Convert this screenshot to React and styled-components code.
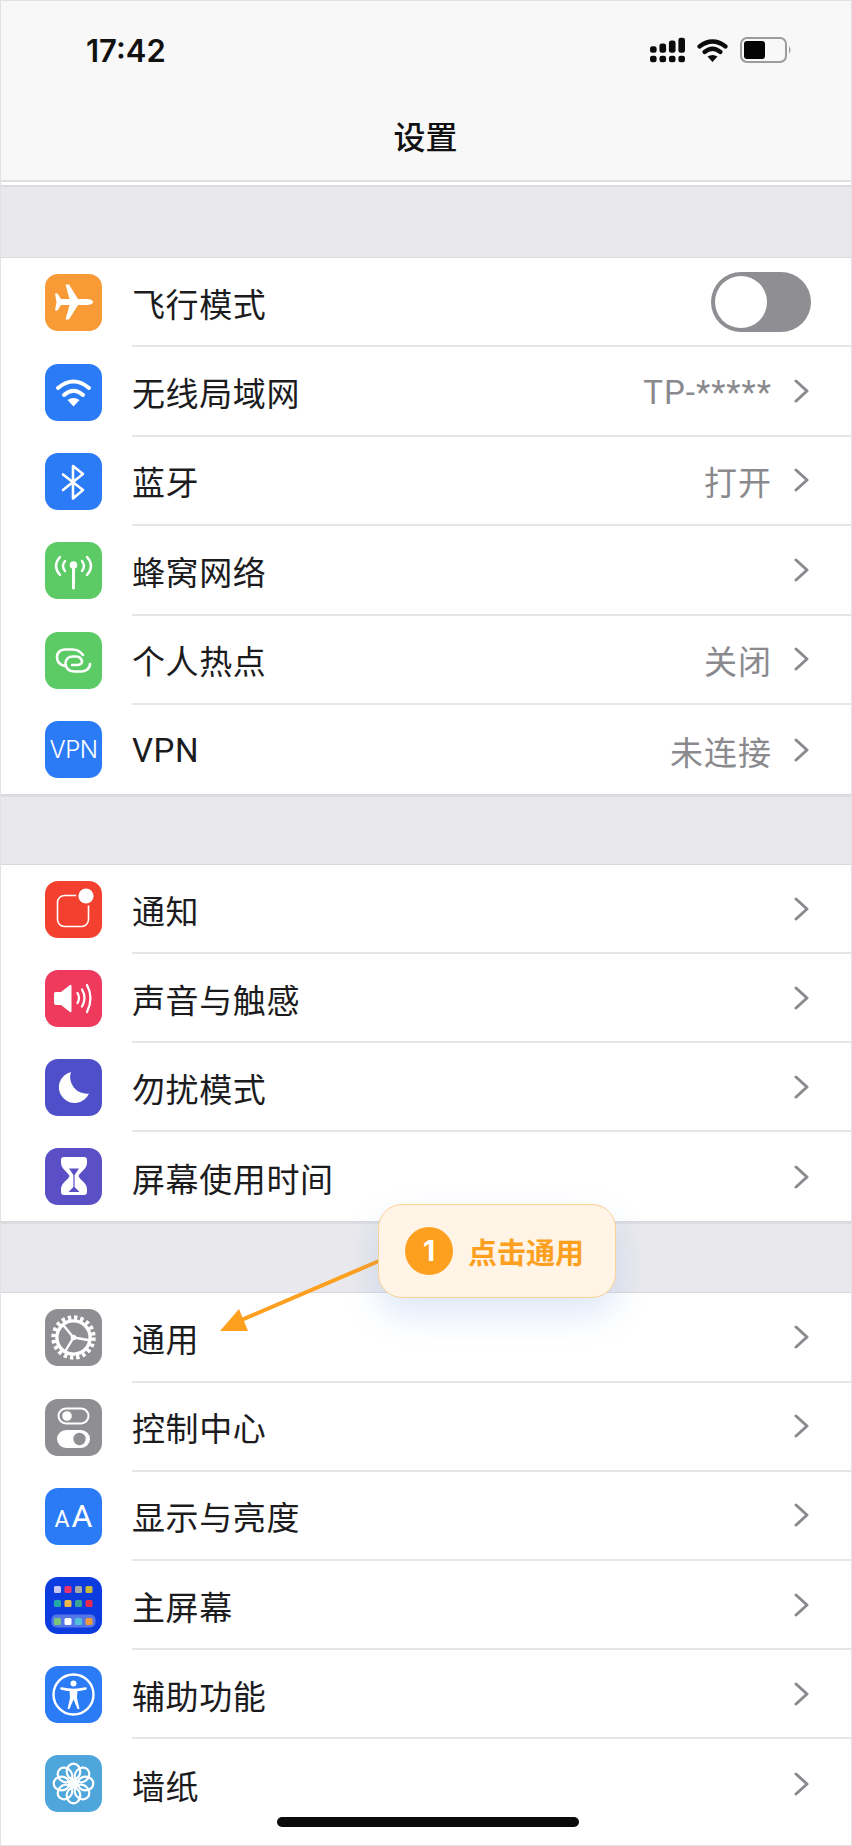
import React from 'react';
import styled, { createGlobalStyle } from 'styled-components';

const GlobalStyle = createGlobalStyle`
  html, body {
    margin: 0;
    padding: 0;
    background: #fff;
  }
  body {
    font-family: Inter, "Noto Sans CJK SC", sans-serif;
    color: #1a1a1a;
  }
`;

const Phone = styled.div`
  position: relative;
  box-sizing: border-box;
  width: 852px;
  height: 1846px;
  overflow: hidden;
  background: #fff;
  border: 1px solid #e2e2e4;
`;

const Header = styled.header`
  box-sizing: border-box;
  height: 181px;
  padding: 33px 59px 0 85px;
  background: #f8f8f8;
  border-bottom: 2px solid #dfdfe1;
  margin-bottom: 3px;
`;

const StatusBar = styled.div`
  display: flex;
  align-items: center;
  justify-content: space-between;
  height: 32px;
`;

const Clock = styled.span`
  font-size: 31px;
  font-weight: 600;
  color: #111;
`;

const StatusIcons = styled.div`
  display: flex;
  align-items: center;
  gap: 12px;
`;

const Title = styled.h1`
  margin: 49px 0 0 -27px;
  text-align: center;
  font-size: 32px;
  line-height: 46px;
  font-weight: 500;
  color: #111;
`;

const Gap = styled.div`
  height: ${(props) => props.$height}px;
  background: #e9e9ed;
  border-top: 2px solid #dcdce0;
  box-sizing: border-box;
`;

const Section = styled.section`
  background: #fff;
  border-top: 1px solid #d9d9dd;
  border-bottom: ${(props) => (props.$open ? 'none' : '1px solid #d9d9dd')};
`;

const Row = styled.div`
  display: flex;
  align-items: center;
  height: ${(props) => props.$height}px;
  padding-left: 44px;
`;

const IconBox = styled.div`
  flex: none;
  width: 57px;
  height: 57px;
  border-radius: 13px;
  background: ${(props) => props.$bg};
  overflow: hidden;
  display: flex;
  align-items: center;
  justify-content: center;
  color: #fff;

  svg {
    display: block;
  }
`;

const RowBody = styled.div`
  flex: 1;
  align-self: stretch;
  display: flex;
  align-items: center;
  margin-left: 30px;
  padding-right: 41px;
  border-bottom: ${(props) => (props.$last ? 'none' : '2px solid #e6e6e8')};
`;

const Label = styled.span`
  flex: 1;
  padding-top: 2px;
  font-family: Roboto, "Noto Sans CJK SC", sans-serif;
  font-size: 33px;
  letter-spacing: 0.6px;
  color: #1c1c1e;
`;

const Value = styled.span`
  padding-top: 2px;
  font-family: Roboto, "Noto Sans CJK SC", sans-serif;
  font-size: 33px;
  color: #8a8a8e;
  margin-right: 21px;
  letter-spacing: 1px;
`;

const Toggle = styled.div`
  box-sizing: border-box;
  width: 100px;
  height: 60px;
  margin-right: -1px;
  padding: 4px;
  border-radius: 30px;
  background: #8e8e93;
`;

const Knob = styled.div`
  width: 52px;
  height: 52px;
  border-radius: 50%;
  background: #fff;
`;

const VpnMark = styled.span`
  font-size: 24px;
  font-weight: 300;
  line-height: 1;
  letter-spacing: -0.5px;
`;

const AaMark = styled.span`
  display: flex;
  align-items: baseline;
  gap: 2px;
  font-family: Roboto, sans-serif;
  line-height: 1;
`;

const AaLetter = styled.span`
  font-size: ${(props) => props.$size}px;
`;

const Callout = styled.div`
  position: absolute;
  left: 377px;
  top: 1203px;
  box-sizing: border-box;
  width: 238px;
  height: 94px;
  display: flex;
  align-items: center;
  gap: 15px;
  padding-left: 26px;
  background: #fff4e6;
  border: 1.5px solid #fbd196;
  border-radius: 24px;
  box-shadow: 0 16px 34px rgba(90, 140, 225, 0.2);
`;

const StepBadge = styled.span`
  flex: none;
  width: 48px;
  height: 48px;
  border-radius: 50%;
  background: #fd9f1f;
  color: #fff;
  font-size: 28px;
  font-weight: 700;
  display: flex;
  align-items: center;
  justify-content: center;
`;

const CalloutText = styled.span`
  font-size: 29px;
  font-weight: 700;
  color: #fd9f1f;
`;

const Arrow = styled.svg`
  position: absolute;
  left: 213px;
  top: 1255px;
`;

const HomeBar = styled.div`
  position: absolute;
  left: 276px;
  top: 1816px;
  width: 302px;
  height: 10px;
  border-radius: 5px;
  background: #0b0b0b;
`;

const Glyph = ({ children }) => (
  <svg width="57" height="57" viewBox="0 0 57 57" fill="none">
    {children}
  </svg>
);

const PlaneIcon = () => (
  <Glyph>
    <path
      d="M48 28c0 2-3 3-6 3h-9L24 45.5h-3.5L24.5 31H16l-3.5 5.5H10L11.5 28 10 19.5h2.5L16 25h8.5l-4-14.5H24L33 25h9c3 0 6 1 6 3Z"
      fill="#fff"
    />
  </Glyph>
);

const WifiIcon = () => (
  <Glyph>
    <g stroke="#fff" strokeWidth="4" strokeLinecap="round">
      <path d="M13 24Q28.5 11 44 24" />
      <path d="M19 31Q28.5 22.5 38 31" />
    </g>
    <path d="M22.5 36Q28.5 32 34.5 36L28.5 42.5Z" fill="#fff" />
  </Glyph>
);

const BluetoothIcon = () => (
  <Glyph>
    <path
      d="M18 21.5 38 37 28 45.5V13L38 21 18 37"
      stroke="#fff"
      strokeWidth="2.6"
      strokeLinejoin="round"
      strokeLinecap="round"
    />
  </Glyph>
);

const CellularIcon = () => (
  <Glyph>
    <g stroke="#fff" strokeWidth="2.4" strokeLinecap="round">
      <path d="M28.5 24V46" strokeWidth="3" />
      <path d="M15 15Q7 24 15 33" />
      <path d="M42 15Q50 24 42 33" />
      <path d="M20 19Q16 24 20 29" />
      <path d="M37 19Q41 24 37 29" />
    </g>
    <circle cx="28.5" cy="23" r="3.8" fill="#fff" />
  </Glyph>
);

const HotspotIcon = () => (
  <Glyph>
    <g stroke="#fff" strokeWidth="2.6" strokeLinecap="round">
      <path d="M38 23C35 19 32 17.5 27.5 17.5H19.5C15 17.5 12 21 12 25 12 30 15.5 33 20 34" />
      <path d="M45 32C45 36.5 41 39.5 36 39.5H29C24 39.5 20.5 36 20.5 31.5 20.5 27.5 23.5 24.5 28 24.5H31C35 24.5 37 27.5 37 29.5 37 31.5 35 33 32 33H27" />
    </g>
  </Glyph>
);

const BellIcon = () => (
  <Glyph>
    <rect x="12.5" y="14.5" width="31" height="31" rx="7" stroke="#fff" strokeWidth="1.6" />
    <circle cx="41" cy="15" r="10" fill="#f4402f" />
    <circle cx="41" cy="15" r="7.6" fill="#fff" />
  </Glyph>
);

const SoundIcon = () => (
  <Glyph>
    <path d="M9 23.5q0-1.5 1.5-1.5H16l9-7q1.5-1 1.5 1v25q0 2-1.5 1l-9-7h-5.5Q9 34.5 9 33Z" fill="#fff" />
    <g stroke="#fff" strokeWidth="2.3" strokeLinecap="round">
      <path d="M32.5 23q3 5 0 10" />
      <path d="M37 19.5q5 8.5 0 17" />
      <path d="M42 15q7 13 0 27" />
    </g>
  </Glyph>
);

const MoonIcon = () => (
  <Glyph>
    <path d="M26 13A15.7 15.7 0 1 0 44 34.5 16.5 16.5 0 0 1 26 13Z" fill="#fff" />
  </Glyph>
);

const HourglassIcon = () => (
  <Glyph>
    <path
      d="M19 9H39Q42 9 42 12V15C42 21 35 24 33.5 28 35 32 42 35 42 41V44Q42 47 39 47H19Q16 47 16 44V41C16 35 23 32 24.5 28 23 24 16 21 16 15V12Q16 9 19 9Z"
      fill="#fff"
    />
    <path d="M24 20.5H34L29.6 27V39L34.5 44H23.5L28.4 39V27Z" fill="#5a4fc4" />
  </Glyph>
);

const GearIcon = () => (
  <Glyph>
    <circle cx="28.5" cy="28.5" r="20" stroke="#fff" strokeWidth="4.4" strokeDasharray="3.4 2.88" />
    <circle cx="28.5" cy="28.5" r="16.6" stroke="#fff" strokeWidth="3.4" />
    <g stroke="#fff" strokeWidth="2.4" strokeLinecap="round">
      <path d="M28.5 28.5 19 17" />
      <path d="M28.5 28.5 43 31" />
      <path d="M28.5 28.5 21 41" />
    </g>
    <circle cx="28.5" cy="28.5" r="2.8" fill="#fff" />
  </Glyph>
);

const ControlIcon = () => (
  <Glyph>
    <rect x="13.5" y="9.5" width="30" height="15" rx="7.5" stroke="#fff" strokeWidth="2" />
    <circle cx="22" cy="17" r="4.8" fill="#fff" />
    <rect x="12" y="31" width="33" height="18" rx="9" fill="#fff" />
    <circle cx="34.5" cy="40" r="6.2" fill="#8e8e93" />
  </Glyph>
);

const homeApps = [
  [9, 9, '#c9c6f5'], [19.5, 9, '#e8336f'], [30, 9, '#a7a7a7'], [40.5, 9, '#c9b63f'],
  [9, 23, '#25a8a8'], [19.5, 23, '#eeb84a'], [30, 23, '#3aa596'], [40.5, 23, '#ea2a4e'],
  [9, 41, '#7cc47c'], [19.5, 41, '#ffffff'], [30, 41, '#4fc0d8'], [40.5, 41, '#f09a40'],
];

const HomeScreenIcon = () => (
  <Glyph>
    <rect x="6.5" y="37.5" width="44" height="13" rx="5" fill="#fff" opacity="0.3" />
    {homeApps.map(([x, y, color]) => (
      <rect key={`${x}-${y}`} x={x} y={y} width="7" height="7" rx="1.5" fill={color} />
    ))}
  </Glyph>
);

const AccessIcon = () => (
  <Glyph>
    <circle cx="28.5" cy="28.5" r="20" stroke="#fff" strokeWidth="2.4" />
    <circle cx="28.5" cy="17.5" r="3" fill="#fff" />
    <path d="M16.5 22.5Q28.5 25.5 40.5 22.5" stroke="#fff" strokeWidth="2.6" strokeLinecap="round" />
    <path d="M24.5 24H32.5L32 32 34.5 43H32.5L28.5 33.5 24.5 43H22.5L25 32Z" fill="#fff" />
  </Glyph>
);

const FlowerIcon = () => (
  <Glyph>
    <g stroke="#fff" strokeWidth="2.2">
      {[0, 45, 90, 135, 180, 225, 270, 315].map((angle) => (
        <ellipse key={angle} cx="28.5" cy="16.5" rx="6.8" ry="7.8" transform={`rotate(${angle} 28.5 28.5)`} />
      ))}
    </g>
    <circle cx="28.5" cy="28.5" r="3.6" fill="#fff" />
  </Glyph>
);

const SignalIcon = () => (
  <svg width="35" height="26" viewBox="0 0 37 26" fill="#0b0b0b">
    <rect x="0" y="9" width="7" height="7" rx="2.5" />
    <rect x="10" y="6" width="7" height="10" rx="2.5" />
    <rect x="20" y="3" width="7" height="13" rx="2.5" />
    <rect x="30" y="0" width="7" height="16" rx="2.5" />
    <rect x="0" y="19" width="7" height="7" rx="2.5" />
    <rect x="10" y="19" width="7" height="7" rx="2.5" />
    <rect x="20" y="19" width="7" height="7" rx="2.5" />
    <rect x="30" y="19" width="7" height="7" rx="2.5" />
  </svg>
);

const StatusWifi = () => (
  <svg width="31" height="24" viewBox="0 0 31 24" fill="none">
    <g stroke="#0b0b0b" strokeWidth="4.2" strokeLinecap="round">
      <path d="M2.5 8.5Q15.5-1.5 28.5 8.5" />
      <path d="M7.5 14Q15.5 7.5 23.5 14" />
    </g>
    <path d="M10.5 18.5Q15.5 15.5 20.5 18.5L15.5 24Z" fill="#0b0b0b" />
  </svg>
);

const Battery = () => (
  <svg width="52" height="26" viewBox="0 0 52 26" fill="none">
    <rect x="1" y="1" width="45" height="24" rx="6" stroke="#9c9c9e" strokeWidth="2" />
    <rect x="4" y="4" width="21" height="18" rx="3" fill="#050505" />
    <path d="M49 9q3 4 0 8Z" fill="#9c9c9e" />
  </svg>
);

const Chevron = () => (
  <svg width="17" height="24" viewBox="0 0 17 24" fill="none">
    <path d="M3 2 14 12 3 22" stroke="#8a8a8e" strokeWidth="3" strokeLinecap="round" strokeLinejoin="round" />
  </svg>
);

const groups = [
  {
    gap: 72,
    rowHeight: 89.4,
    rows: [
      { label: '飞行模式', bg: '#f89a35', icon: <PlaneIcon />, toggle: true },
      { label: '无线局域网', bg: '#2b7bf6', icon: <WifiIcon />, value: 'TP-*****' },
      { label: '蓝牙', bg: '#2b7bf6', icon: <BluetoothIcon />, value: '打开' },
      { label: '蜂窝网络', bg: '#5ccb66', icon: <CellularIcon /> },
      { label: '个人热点', bg: '#5ccb66', icon: <HotspotIcon />, value: '关闭' },
      { label: 'VPN', bg: '#2b7bf6', icon: <VpnMark>VPN</VpnMark>, value: '未连接' },
    ],
  },
  {
    gap: 69,
    rowHeight: 89,
    rows: [
      { label: '通知', bg: '#f4402f', icon: <BellIcon /> },
      { label: '声音与触感', bg: '#ef3a5d', icon: <SoundIcon /> },
      { label: '勿扰模式', bg: '#4f50c9', icon: <MoonIcon /> },
      { label: '屏幕使用时间', bg: '#5a4fc4', icon: <HourglassIcon /> },
    ],
  },
  {
    gap: 70,
    rowHeight: 89.2,
    rows: [
      { label: '通用', bg: '#8e8e93', icon: <GearIcon /> },
      { label: '控制中心', bg: '#8e8e93', icon: <ControlIcon /> },
      {
        label: '显示与亮度',
        bg: '#2b7bf6',
        icon: (
          <AaMark>
            <AaLetter $size={23}>A</AaLetter>
            <AaLetter $size={32}>A</AaLetter>
          </AaMark>
        ),
      },
      { label: '主屏幕', bg: '#0c3be0', icon: <HomeScreenIcon /> },
      { label: '辅助功能', bg: '#2b7bf6', icon: <AccessIcon /> },
      { label: '墙纸', bg: '#4fa6db', icon: <FlowerIcon /> },
    ],
  },
];

const App = () => (
  <>
    <GlobalStyle />
    <Phone>
      <Header>
        <StatusBar>
          <Clock>17:42</Clock>
          <StatusIcons>
            <SignalIcon />
            <StatusWifi />
            <Battery />
          </StatusIcons>
        </StatusBar>
        <Title>设置</Title>
      </Header>
      {groups.map((group, index) => (
        <React.Fragment key={group.rows[0].label}>
          <Gap $height={group.gap} />
          <Section $open={index === groups.length - 1}>
            {group.rows.map((row, rowIndex) => (
              <Row key={row.label} $height={group.rowHeight}>
                <IconBox $bg={row.bg}>{row.icon}</IconBox>
                <RowBody $last={rowIndex === group.rows.length - 1}>
                  <Label>{row.label}</Label>
                  {row.value && <Value>{row.value}</Value>}
                  {row.toggle ? (
                    <Toggle>
                      <Knob />
                    </Toggle>
                  ) : (
                    <Chevron />
                  )}
                </RowBody>
              </Row>
            ))}
          </Section>
        </React.Fragment>
      ))}
      <Arrow width="170" height="85" viewBox="0 0 170 85" fill="none">
        <path d="M165 5 18 68" stroke="#fd9f1f" strokeWidth="4" />
        <path d="M6 75 25 53 34 75Z" fill="#fd9f1f" />
      </Arrow>
      <Callout>
        <StepBadge>1</StepBadge>
        <CalloutText>点击通用</CalloutText>
      </Callout>
      <HomeBar />
    </Phone>
  </>
);

export default App;
